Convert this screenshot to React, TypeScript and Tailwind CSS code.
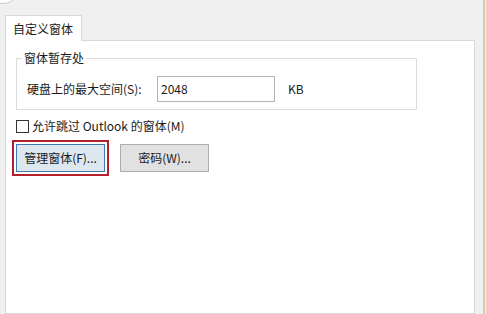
import React from "react";

export default function App() {
  const font = { fontFamily: '"Segoe UI", "Noto Sans CJK SC", "Noto Sans", sans-serif' };
  return (
    <div
      className="relative w-[486px] h-[314px] overflow-hidden bg-[#f0f0f0] flex text-[12px] leading-[16px] text-[#1a1a1a]"
      style={font}
    >
      <div className="absolute left-[-14px] top-[-30px] w-[34px] h-[34px] rounded-full bg-white border border-[#c8c8c8]" />
      <div className="w-[475px] pl-[5px] pt-[15px] flex flex-col">
        <div className="relative z-10 -mb-px w-[77px] h-[26px] border border-b-0 border-[#d9d9d9] bg-white pl-[7px] pt-[5px]">
          自定义窗体
        </div>
        <div className="flex-1 border border-[#d9d9d9] bg-white flex flex-col items-start">
          <fieldset className="ml-[10px] mt-[9px] w-[401px] border border-[#dcdcdc] pb-[7px]">
            <legend className="ml-[5px] px-[2px]">窗体暂存处</legend>
            <div className="flex items-center mt-[10px] pl-[10px]">
              <span className="w-[130px]">硬盘上的最大空间(S):</span>
              <div className="w-[118px] h-[26px] border border-[#b4b4b4] flex items-center pl-[3px]">2048</div>
              <span className="ml-[13px]">KB</span>
            </div>
          </fieldset>
          <div className="flex items-center ml-[10px] mt-[8px] gap-[3px]">
            <div className="w-[13px] h-[13px] border border-[#333333] bg-white" />
            <span>允许跳过 Outlook 的窗体(M)</span>
          </div>
          <div className="flex items-center ml-[6px] mt-[6px]">
            <div className="border-2 border-[#b5202e] p-[2px]">
              <div className="w-[89px] h-[28px] border border-[#3d7ab0] bg-[#dde7f0] flex items-center justify-center">
                管理窗体(F)...
              </div>
            </div>
            <div className="ml-[11px] w-[89px] h-[28px] border border-[#adadad] bg-[#e1e1e1] flex items-center justify-center">
              密码(W)...
            </div>
          </div>
        </div>
      </div>
      <div className="w-[8px]" />
      <div className="w-[2px] bg-[#c9d4a6]" />
    </div>
  );
}
